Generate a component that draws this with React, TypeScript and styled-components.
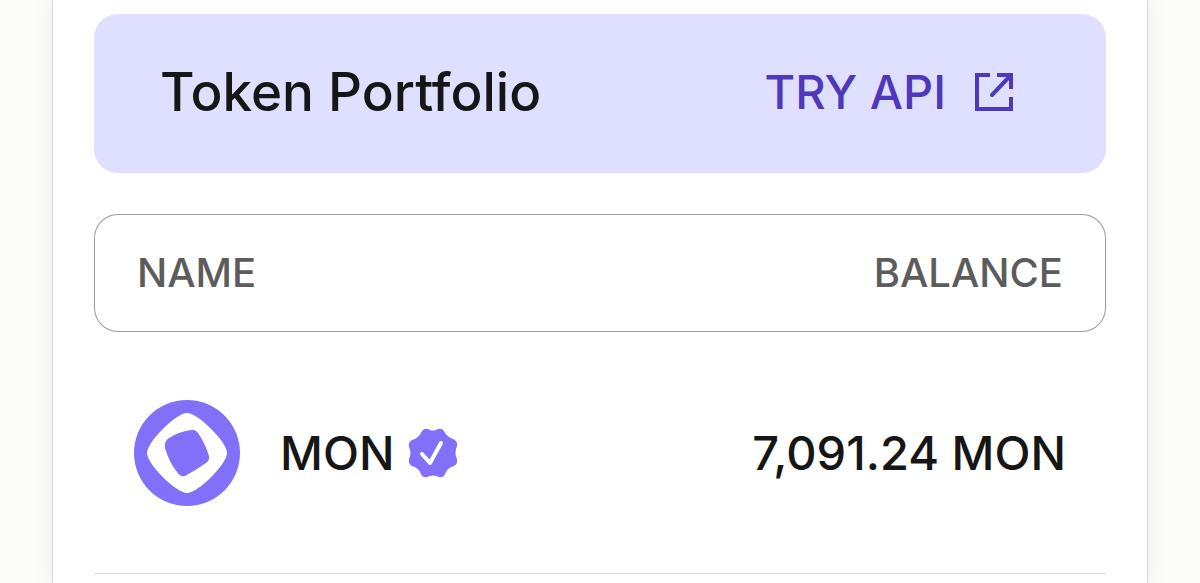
import React from "react";
import styled, { createGlobalStyle } from "styled-components";

const Global = createGlobalStyle`
  * { box-sizing: border-box; }
  body { margin: 0; background: #fcfcfb; font-family: Inter, "Liberation Sans", sans-serif; color: #161616; overflow-x: hidden; }
`;
const Panel = styled.main`
  margin: 0 52px;
  min-height: 100vh;
  padding: 14px 41px 0;
  background: #fff;
  border: solid #d6d6d8;
  border-width: 0 1px;
  box-shadow: 0 0 24px rgba(0, 0, 0, 0.07);
`;
const Banner = styled.header`
  display: flex;
  align-items: center;
  justify-content: space-between;
  height: 159px;
  padding: 0 92px 3px 66px;
  border-radius: 24px;
  background: #dfe0ff;
`;
const Title = styled.h1`
  margin: 0;
  font-size: 53px;
  line-height: 68px;
  font-weight: 500;
`;
const ApiLink = styled.a`
  display: flex;
  align-items: center;
  gap: 28px;
  color: #5038bc;
  font-size: 47px;
  line-height: 60px;
  font-weight: 500;
  text-decoration: none;
`;
const Table = styled.table`
  width: 100%;
  margin-top: 41px;
  border-collapse: separate;
  border-spacing: 0;
`;
const HeadCell = styled.th<{ $end?: boolean }>`
  height: 118px;
  padding: 0 42px;
  border: solid #999ba3;
  border-width: ${(p) => (p.$end ? "1px 1px 1px 0" : "1px 0 1px 1px")};
  border-radius: ${(p) => (p.$end ? "0 24px 24px 0" : "24px 0 0 24px")};
  color: #5c5c5c;
  font-size: 40px;
  line-height: 48px;
  font-weight: 500;
  text-align: ${(p) => (p.$end ? "right" : "left")};
`;
const Cell = styled.td<{ $end?: boolean }>`
  height: 242px;
  padding: 0 40px;
  border-bottom: 1px solid #dcdcde;
  font-size: 47px;
  line-height: 60px;
  font-weight: 500;
  text-align: ${(p) => (p.$end ? "right" : "left")};
`;
const Token = styled.div`
  display: flex;
  align-items: center;
`;
const TokenName = styled.span`
  margin: 0 14px 0 40px;
`;

const ExternalIcon = () => (
  <svg width="40" height="40" viewBox="0 0 40 40" fill="none" stroke="currentColor" strokeWidth="4" aria-hidden="true">
    <path d="M16 3H3v34h34V25M23 3h14v14" />
    <path d="M36 4L18 23" strokeLinecap="round" />
  </svg>
);
const MonLogo = () => (
  <svg width="106" height="106" viewBox="0 0 106 106" aria-hidden="true">
    <circle cx="53" cy="53" r="53" fill="#8270fb" />
    <path fill="#fff" d="M53 13C42 13 13 42 13 53S42 93 53 93 93 64 93 53 64 13 53 13Z" />
    <path fill="#8270fb" d="M35 38Q44 32 57 30Q61 29 64 33Q71 43 75 56Q76 60 72 63Q62 70 51 76Q46 77 43 72Q35 62 31 48Q30 41 35 38Z" />
  </svg>
);
const VerifiedIcon = () => (
  <svg width="50" height="50" viewBox="0 0 50 50" role="img" aria-label="Verified">
    <path
      fill="#8270fb"
      d="M14 3Q16 0 20 1Q25 4 30 1Q34 0 36 3Q39 9 45 11Q50 13 49 18Q46 25 49 31Q50 36 46 38Q39 40 37 46Q35 50 31 49Q25 46 19 49Q15 50 13 46Q11 40 4 38Q0 36 1 31Q4 25 1 19Q0 14 4 12Q11 10 14 3Z"
    />
    <path d="M14 26l8 9L33 15" fill="none" stroke="#fff" strokeWidth="4" strokeLinecap="round" strokeLinejoin="round" />
  </svg>
);

export default function App() {
  return (
    <>
      <Global />
      <Panel>
        <Banner>
          <Title>Token Portfolio</Title>
          <ApiLink href="#api">TRY API<ExternalIcon /></ApiLink>
        </Banner>
        <Table>
          <thead><tr><HeadCell scope="col">NAME</HeadCell><HeadCell scope="col" $end>BALANCE</HeadCell></tr></thead>
          <tbody><tr>
            <Cell><Token><MonLogo /><TokenName>MON</TokenName><VerifiedIcon /></Token></Cell>
            <Cell $end>7,091.24 MON</Cell>
          </tr></tbody>
        </Table>
      </Panel>
    </>
  );
}
